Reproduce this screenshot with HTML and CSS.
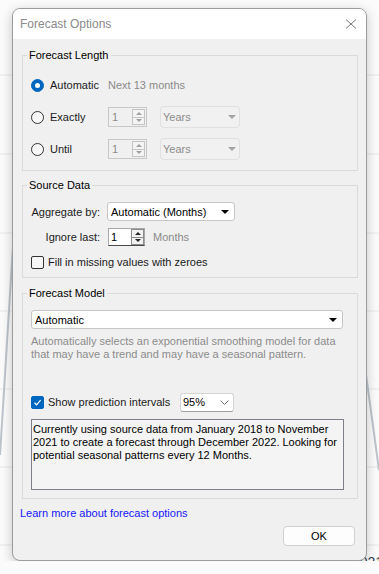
FILE: index.html
```html
<!DOCTYPE html>
<html lang="en">
<head>
    <meta charset="UTF-8">
    <meta name="viewport" content="width=device-width, initial-scale=1.0">
    <title>Forecast Options</title>
    <link rel="stylesheet" href="styles.css">
</head>
<body>
    <!-- chart behind the dialog -->
    <svg class="chart" width="379" height="574" viewBox="0 0 379 574">
        <g class="grid">
            <line x1="0" y1="75" x2="379" y2="75"/>
            <line x1="0" y1="154" x2="379" y2="154"/>
            <line x1="0" y1="233" x2="379" y2="233"/>
            <line x1="0" y1="311" x2="379" y2="311"/>
            <line x1="0" y1="389" x2="379" y2="389"/>
            <line x1="0" y1="467" x2="379" y2="467"/>
            <line x1="0" y1="545" x2="379" y2="545"/>
        </g>
        <g class="trend">
            <line x1="14" y1="230" x2="0" y2="455"/>
            <line x1="364" y1="360" x2="379" y2="470"/>
        </g>
        <g class="years">
            <text x="50" y="567">2019</text>
            <text x="200" y="567">2020</text>
            <text x="352" y="567">2021</text>
        </g>
    </svg>

    <div class="dialog">
        <div class="titlebar">
            <span class="title">Forecast Options</span>
            <svg class="close" width="12" height="12" viewBox="0 0 12 12">
                <path d="M1 1.5L11 10.5M11 1.5L1 10.5"/>
            </svg>
        </div>

        <div class="dialog-body">
            <fieldset class="group">
                <legend>Forecast Length</legend>
                <div class="rows">
                    <div class="row">
                        <span class="radio checked"></span>
                        <span class="opt-label">Automatic</span>
                        <span class="muted">Next 13 months</span>
                    </div>
                    <div class="row">
                        <span class="radio"></span>
                        <span class="opt-label">Exactly</span>
                        <div class="spinner disabled">
                            <span class="spin-value">1</span>
                            <span class="spin-btns"><i class="up"></i><i class="down"></i></span>
                        </div>
                        <div class="select years disabled"><span>Years</span><i class="caret"></i></div>
                    </div>
                    <div class="row">
                        <span class="radio"></span>
                        <span class="opt-label">Until</span>
                        <div class="spinner disabled">
                            <span class="spin-value">1</span>
                            <span class="spin-btns"><i class="up"></i><i class="down"></i></span>
                        </div>
                        <div class="select years disabled"><span>Years</span><i class="caret"></i></div>
                    </div>
                </div>
            </fieldset>

            <fieldset class="group group-source">
                <legend>Source Data</legend>
                <div class="form-grid">
                    <span class="field-label">Aggregate by:</span>
                    <div class="select aggregate"><span>Automatic (Months)</span><i class="caret"></i></div>
                    <span class="field-label">Ignore last:</span>
                    <div class="inline">
                        <div class="spinner small">
                            <span class="spin-value">1</span>
                            <span class="spin-btns"><i class="up"></i><i class="down"></i></span>
                        </div>
                        <span class="muted unit">Months</span>
                    </div>
                </div>
                <div class="check-row">
                    <span class="checkbox"></span>
                    <span>Fill in missing values with zeroes</span>
                </div>
            </fieldset>

            <fieldset class="group group-model">
                <legend>Forecast Model</legend>
                <div class="select model"><span>Automatic</span><i class="caret"></i></div>
                <p class="description">Automatically selects an exponential smoothing model for data<br>that may have a trend and may have a seasonal pattern.</p>
                <div class="check-row intervals">
                    <span class="checkbox checked">
                        <svg width="9" height="9" viewBox="0 0 9 9"><path d="M1.5 4.8L3.6 6.8L7.6 2.2"/></svg>
                    </span>
                    <span class="interval-label">Show prediction intervals</span>
                    <div class="select percent"><span>95%</span>
                        <svg class="chevron" width="9" height="5" viewBox="0 0 9 5"><path d="M0.5 0.5L4.5 4.5L8.5 0.5"/></svg>
                    </div>
                </div>
                <div class="summary">
                    <div>Currently using source data from January 2018 to November</div>
                    <div>2021 to create a forecast through December 2022. Looking for</div>
                    <div>potential seasonal patterns every 12 Months.</div>
                </div>
            </fieldset>

            <a class="help-link" href="#">Learn more about forecast options</a>

            <div class="actions">
                <button class="ok-button">OK</button>
            </div>
        </div>
    </div>
</body>
</html>
```

FILE: styles.css
```css
body {
    margin: 0;
    position: relative;
    overflow: hidden;
    background-color: #fbfbfb;
    font-family: "Liberation Sans", Arial, sans-serif;
    font-size: 11px;
    color: #1a1a1a;
}

.chart {
    position: absolute;
    top: 0;
    left: 0;
}

.grid line {
    stroke: #e6e6e6;
    stroke-width: 1;
}

.trend line {
    stroke: #bcc4cc;
    stroke-width: 2;
}

.years text {
    font-family: "Liberation Sans", Arial, sans-serif;
    font-size: 14px;
    fill: #2e3d4f;
}

.dialog {
    position: relative;
    margin: 8px 0 0 12px;
    width: 355px;
    box-sizing: border-box;
    border: 1px solid #9c9c9c;
    border-radius: 8px;
    background-color: #f0f0f0;
    box-shadow: 0 3px 12px rgba(0, 0, 0, 0.22);
    overflow: hidden;
}

.titlebar {
    height: 30px;
    display: flex;
    align-items: center;
    justify-content: space-between;
    padding: 0 9px 0 7px;
    background-color: #fff;
}

.title {
    font-size: 12px;
    color: #8a8a8a;
}

.close path {
    stroke: #7a7a7a;
    stroke-width: 1;
    fill: none;
}

.dialog-body {
    padding: 9px 8px 14px 9px;
}

.group {
    margin: 0;
    min-width: 0;
    padding: 12px 8px 10px;
    border: 1px solid #dadada;
}

.group legend {
    padding: 0 2px;
    margin-left: -4px;
    line-height: 14px;
    color: #000;
}

.group-source {
    margin-top: 7px;
    padding: 10px 8px 8px;
}

.group-model {
    margin-top: 8px;
    padding: 10px 8px 8px;
}

.rows {
    display: flex;
    flex-direction: column;
    gap: 10px;
}

.row {
    display: flex;
    align-items: center;
    height: 22px;
}

.radio {
    position: relative;
    width: 13px;
    height: 13px;
    box-sizing: border-box;
    border: 1px solid #333;
    border-radius: 50%;
    background-color: #f7f7f7;
    margin-right: 6px;
}

.radio.checked {
    background-color: #0067c0;
    border-color: #0067c0;
}

.radio.checked::after {
    content: "";
    position: absolute;
    left: 3px;
    top: 3px;
    width: 5px;
    height: 5px;
    border-radius: 50%;
    background-color: #fff;
}

.opt-label {
    width: 58px;
}

.muted {
    color: #8a8a8a;
}

/* spin boxes */
.spinner {
    display: flex;
    align-items: center;
    box-sizing: border-box;
    width: 39px;
    height: 20px;
    border: 1px solid #c8c8c8;
    background-color: #f0f0f0;
}

.spin-value {
    flex: 1;
    padding-left: 3px;
}

.spinner.disabled .spin-value {
    color: #8c8c8c;
}

.spin-btns {
    display: flex;
    flex-direction: column;
    box-sizing: border-box;
    width: 13px;
    height: 16px;
    margin-right: 1px;
    border: 1px solid #c4c4c4;
    background-color: #f4f4f4;
}

.spin-btns i {
    flex: 1;
    display: flex;
    align-items: center;
    justify-content: center;
}

.spin-btns i + i {
    border-top: 1px solid #c4c4c4;
}

.spin-btns i::before {
    content: "";
    border-left: 3px solid transparent;
    border-right: 3px solid transparent;
}

.spin-btns .up::before {
    border-bottom: 3px solid #a0a0a0;
}

.spin-btns .down::before {
    border-top: 3px solid #a0a0a0;
}

.spinner.small {
    width: 37px;
    height: 18px;
    margin-left: 1px;
    background-color: #fff;
    border-color: #a8a8a8 #a8a8a8 #4a4a4a;
}

.spinner.small .spin-value {
    padding-left: 2px;
    color: #000;
}

.spinner.small .spin-btns {
    height: 16px;
    margin-right: 0;
    border-color: #8a8a8a;
    background-color: #f2f2f2;
}

.spinner.small .spin-btns i + i {
    border-top-color: #8a8a8a;
}

.spinner.small .up::before {
    border-bottom-color: #222;
}

.spinner.small .down::before {
    border-top-color: #222;
}

/* drop downs */
.select {
    display: flex;
    align-items: center;
    justify-content: space-between;
    box-sizing: border-box;
    height: 19px;
    padding: 0 5px 0 3px;
    border: 1px solid #c6c6c6;
    border-radius: 3px;
    background-color: #fff;
    color: #000;
}

.caret {
    border-left: 4px solid transparent;
    border-right: 4px solid transparent;
    border-top: 4px solid #000;
}

.select.years {
    width: 80px;
    height: 22px;
    margin-left: 13px;
    padding: 0 3px 0 2px;
    border-color: #e0e0e0;
    border-radius: 4px;
    background-color: #f1f1f1;
    color: #8c8c8c;
}

.select.years .caret {
    border-top-color: #a4a4a4;
}

.select.aggregate {
    width: 128px;
}

.select.model {
    width: 312px;
}

.select.percent {
    width: 54px;
    padding: 0 4px 0 2px;
    border-color: #d4d4d4 #d4d4d4 #a0a0a0;
}

.chevron path {
    stroke: #707070;
    stroke-width: 1;
    fill: none;
}

.form-grid {
    display: grid;
    grid-template-columns: 69px auto;
    column-gap: 7px;
    row-gap: 7px;
    align-items: center;
}

.field-label {
    text-align: right;
}

.inline {
    display: flex;
    align-items: center;
}

.unit {
    margin-left: 8px;
}

.check-row {
    display: flex;
    align-items: center;
    height: 14px;
    margin-top: 9px;
}

.checkbox {
    display: flex;
    align-items: center;
    justify-content: center;
    width: 13px;
    height: 13px;
    box-sizing: border-box;
    border: 1px solid #333;
    border-radius: 2px;
    background-color: #f7f7f7;
    margin-right: 4px;
}

.checkbox.checked {
    background-color: #0067c0;
    border-color: #0067c0;
}

.checkbox path {
    stroke: #fff;
    stroke-width: 1.2;
    fill: none;
}

.description {
    margin: 6px 0 0;
    line-height: 13.3px;
    color: #8c8c8c;
    white-space: nowrap;
}

.check-row.intervals {
    height: 19px;
    margin-top: 31px;
}

.interval-label {
    width: 132px;
}

.summary {
    box-sizing: border-box;
    width: 313px;
    height: 71px;
    margin-top: 7px;
    padding: 3px 1px;
    border: 1px solid #7f7f8c;
    background-color: #f4f4f4;
    line-height: 13px;
    color: #000;
    white-space: nowrap;
}

.help-link {
    display: block;
    margin: 7px 0 0 -2px;
    line-height: 14px;
    color: #1616ff;
    text-decoration: none;
}

.actions {
    display: flex;
    justify-content: flex-end;
    margin-top: 6px;
}

.ok-button {
    width: 72px;
    height: 20px;
    margin-right: 3px;
    padding: 0;
    font-family: inherit;
    font-size: 11px;
    color: #000;
    border: 1px solid #d0d0d0;
    border-radius: 4px;
    background-color: #fdfdfd;
}
```
